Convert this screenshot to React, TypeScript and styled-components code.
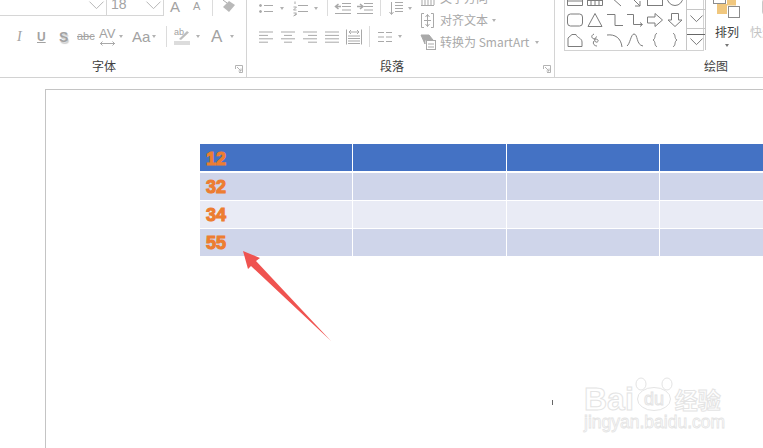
import React from 'react';
import styled, { createGlobalStyle } from 'styled-components';

const GlobalStyle = createGlobalStyle`
  html, body {
    margin: 0;
    width: 763px;
    height: 448px;
    overflow: hidden;
    background: #fff;
    font-family: "Liberation Sans", "Noto Sans CJK SC", sans-serif;
  }
`;

const Page = styled.div`
  width: 763px;
  height: 448px;
  display: flex;
  flex-direction: column;
  overflow: hidden;
`;

const Ribbon = styled.header`
  flex: none;
  height: 78px;
  box-sizing: border-box;
  display: flex;
  border-bottom: 1px solid #d2d2d2;
`;

const Group = styled.section<{ $w?: number }>`
  position: relative;
  box-sizing: border-box;
  flex: ${p => (p.$w ? `0 0 ${p.$w}px` : '1 1 0')};
  min-width: 0;
  height: 77px;
  display: flex;
  flex-direction: column;
  overflow: hidden;
  border-right: ${p => (p.$w ? '1px solid #d4d4d4' : 'none')};
`;

const GroupBody = styled.div`
  flex: 1;
  min-height: 0;
  display: flex;
`;

const Column = styled.div<{ $w?: number }>`
  flex: none;
  width: ${p => (p.$w ? `${p.$w}px` : 'auto')};
`;

const GroupLabel = styled.div<{ $x: number }>`
  flex: none;
  height: 15px;
  margin-bottom: 4px;
  padding-left: ${p => p.$x}px;
  font: 12px/15px "Noto Sans CJK SC", sans-serif;
  color: #404040;
`;

const Launcher = styled.svg`
  position: absolute;
  right: 3px;
  top: 65px;
  width: 8px;
  height: 8px;
  fill: none;
  stroke: #b4b4b4;
`;

const TopRow = styled.div<{ $pad?: number }>`
  display: flex;
  align-items: center;
  height: 16px;
  margin-bottom: 10px;
  padding-left: ${p => p.$pad ?? 0}px;
`;

const ToolRow = styled.div<{ $pad?: number }>`
  display: flex;
  align-items: center;
  height: 21px;
  padding-left: ${p => p.$pad ?? 0}px;
`;

const Slot = styled.div<{ $w: number; $inset?: number }>`
  flex: none;
  box-sizing: border-box;
  width: ${p => p.$w}px;
  padding-left: ${p => p.$inset ?? 0}px;
  display: flex;
  align-items: center;
`;

const Divider = styled.i<{ $h: number; $after: number }>`
  flex: none;
  width: 1px;
  height: ${p => p.$h}px;
  margin-right: ${p => p.$after}px;
  background: #dcdcdc;
`;

const Caret = styled.i`
  display: block;
  flex: none;
  width: 0;
  height: 0;
  border-left: 2.5px solid transparent;
  border-right: 2.5px solid transparent;
  border-top: 3px solid #b2b2b2;
`;

const Glyph = styled.svg<{ $tone?: string }>`
  display: block;
  flex: none;
  fill: none;
  stroke: ${p => p.$tone ?? '#a9a9a9'};
  stroke-width: 1;
  overflow: visible;
`;

const FontCombo = styled.div`
  flex: none;
  box-sizing: border-box;
  width: 164px;
  height: 17px;
  margin-top: -1px;
  display: flex;
  border-bottom: 1px solid #d6d6d6;
  border-right: 1px solid #d6d6d6;
`;

const ComboCell = styled.div<{ $w: number; $split?: boolean }>`
  flex: none;
  box-sizing: border-box;
  width: ${p => p.$w}px;
  display: flex;
  align-items: center;
  justify-content: space-between;
  padding: 0 2px 3px 4px;
  border-right: ${p => (p.$split ? '1px solid #d6d6d6' : 'none')};
`;

const SizeValue = styled.span`
  font-size: 14px;
  line-height: 14px;
  margin-top: -3px;
  color: #a3a3a3;
`;

const FaceText = styled.span<{ $size: number }>`
  font-size: ${p => p.$size}px;
  line-height: 1;
  color: #a2a2a2;
  white-space: nowrap;
`;

const GrowFace = styled(FaceText)`
  margin-top: -3px;
`;

const ItalicFace = styled(FaceText)`
  font-family: "Liberation Serif", serif;
  font-style: italic;
  padding-left: 2px;
`;

const UnderFace = styled(FaceText)`
  font-weight: 700;
  text-decoration: underline;
`;

const ShadowFace = styled(FaceText)`
  font-weight: 700;
  text-shadow: 1px 2px 1px #cfcfcf;
`;

const StruckFace = styled(FaceText)`
  text-decoration: line-through;
`;

const StackedFace = styled.div`
  display: flex;
  flex-direction: column;
  align-items: center;
  gap: 1px;
`;

const TextCommands = styled.div`
  flex: none;
  margin-top: -13px;
`;

const CommandRow = styled.div`
  height: 22px;
  display: flex;
  align-items: center;
  gap: 6px;
`;

const CommandText = styled.span`
  font: 12px/14px "Noto Sans CJK SC", sans-serif;
  color: #a9a9a9;
  white-space: nowrap;
`;

const CommandCaret = styled(Caret)`
  margin-left: -2px;
`;

const SmartArtGlyph = styled(Glyph)`
  margin-right: -2px;
`;

const DrawingBody = styled(GroupBody)`
  padding-left: 9px;
`;

const Gallery = styled.div`
  flex: none;
  box-sizing: border-box;
  width: 140px;
  height: 61px;
  margin-top: -10px;
  display: flex;
  border: 1px solid #d2d2d2;
  border-top: none;
`;

const ShapeGrid = styled.div`
  flex: none;
  width: 120px;
  display: grid;
  grid-template-columns: repeat(6, 20px);
  grid-auto-rows: 20px;
  align-items: center;
  justify-items: center;
`;

const GalleryScroll = styled.div`
  flex: none;
  width: 18px;
  margin-left: 1px;
  display: flex;
  flex-direction: column;
  border-left: 1px solid #c6c6c6;
  border-right: 1px solid #c6c6c6;
`;

const ScrollButton = styled.div<{ $h: number }>`
  box-sizing: border-box;
  height: ${p => p.$h}px;
  display: flex;
  flex-direction: column;
  align-items: center;
  justify-content: center;
  gap: 3px;
  border-bottom: 1px solid #c6c6c6;
  &:last-child { border-bottom: none; }
`;

const ScrollBar = styled.i`
  display: block;
  width: 100%;
  height: 1px;
  background: #666;
`;

const BigCommand = styled.div`
  flex: none;
  width: 46px;
  display: flex;
  flex-direction: column;
  align-items: center;
`;

const BigLabel = styled.span`
  margin-top: 5px;
  font: 12px/14px "Noto Sans CJK SC", sans-serif;
  color: #404040;
`;

const BigCaret = styled(Caret)`
  margin-top: 5px;
  border-top-color: #777;
`;

const QuickCommand = styled.div`
  flex: none;
  width: 40px;
`;

const QuickIcon = styled.div`
  box-sizing: border-box;
  width: 20px;
  height: 16px;
  margin: -1px 0 0 12px;
  border: 1px solid #c8c8c8;
  border-radius: 3px;
`;

const QuickLabel = styled.div`
  margin-top: 10px;
  font: 12px/14px "Noto Sans CJK SC", sans-serif;
  color: #c4c4c4;
  white-space: nowrap;
`;

const Workspace = styled.main`
  flex: 1;
  min-height: 0;
  display: flex;
  padding: 11px 0 0 45px;
`;

const Slide = styled.div`
  position: relative;
  flex: 1;
  min-width: 0;
  overflow: hidden;
  padding: 54px 0 0 154px;
  border-top: 1px solid #c4c4c4;
  border-left: 1px solid #c4c4c4;
`;

const SlideTable = styled.div`
  width: 700px;
  display: grid;
  grid-template-columns: repeat(4, 152.33px);
  grid-template-rows: 28px 27px 27px 27px;
  column-gap: 1px;
  row-gap: 1px;
`;

const TableCell = styled.div<{ $tone: string }>`
  display: flex;
  align-items: center;
  padding: 1px 0 0 6px;
  background: ${p => p.$tone};
  font-size: 18px;
  font-weight: 700;
  color: #ed7d31;
  -webkit-text-stroke: 1.1px #ed7d31;
`;

const HeaderCell = styled(TableCell)`
  padding-top: 3px;
  border-bottom: 1px solid #fff;
`;

const PointerArrow = styled.svg`
  position: absolute;
  left: 194px;
  top: 158px;
  width: 95px;
  height: 97px;
  fill: #ef5350;
`;

const TextCursor = styled.i`
  position: absolute;
  left: 506px;
  top: 310px;
  width: 1px;
  height: 5px;
  background: #666;
`;

const Watermark = styled.div`
  position: absolute;
  left: 538px;
  top: 285px;
  width: 145px;
  display: flex;
  flex-direction: column;
  color: #fff;
  -webkit-text-stroke: 1px #e4e4e4;
`;

const WatermarkLogo = styled.div`
  display: flex;
  align-items: flex-end;
  height: 38px;
`;

const WatermarkWord = styled.span`
  font-size: 32px;
  line-height: 28px;
  font-weight: 700;
`;

const WatermarkPaw = styled(Glyph)`
  margin-left: 1px;
`;

const WatermarkHan = styled.span`
  margin-left: 2px;
  font: 700 23px/28px "Noto Sans CJK SC", sans-serif;
`;

const WatermarkUrl = styled.span`
  font-size: 17.5px;
  line-height: 18px;
  -webkit-text-stroke: 0.8px #e4e4e4;
`;

const Chevron = ({ w = 15, tone = '#b8b8b8' }: { w?: number; tone?: string }) => (
  <Glyph $tone={tone} width={w} height={w * 0.55} viewBox="0 0 15 8">
    <path d="M0.5 0.5L7.5 7.5L14.5 0.5" />
  </Glyph>
);

const LinesIcon = ({ rows }: { rows: [number, number][] }) => (
  <Glyph width={15} height={12} viewBox="0 0 15 12">
    {rows.map(([x, len], i) => (
      <path key={i} d={`M${x} ${1 + i * 3.4}H${x + len}`} />
    ))}
  </Glyph>
);

const BulletsIcon = () => (
  <Glyph width={14} height={9} viewBox="0 0 14 9">
    <circle cx="1.5" cy="1.5" r="1" fill="#a9a9a9" />
    <circle cx="1.5" cy="7.5" r="1" fill="#a9a9a9" />
    <path d="M5 1.5H14M5 7.5H14" />
  </Glyph>
);

const NumbersIcon = () => (
  <Glyph width={15} height={15} viewBox="0 0 15 15">
    <path d="M2 0.5V3M0.5 6H3.5L0.5 9H3.5M0.5 12H3.5L2 13.5H3.5L0.5 15" />
    <path d="M5 4.5H15M5 10.5H15" />
  </Glyph>
);

const OutdentIcon = ({ flip }: { flip?: boolean }) => (
  <Glyph width={16} height={11} viewBox="0 0 16 11">
    <path d="M7 0.5H16M7 3.5H16M7 7H16M0 10.5H16" />
    <path
      d={flip ? 'M0 3.5H5M3 1L6 3.5L3 6' : 'M6 3.5H1M3.5 1L0.5 3.5L3.5 6'}
      strokeWidth="1.5"
    />
  </Glyph>
);

const SpacingIcon = () => (
  <Glyph width={14} height={13} viewBox="0 0 14 13">
    <path d="M2.5 0V12M0.5 10L2.5 12.5L4.5 10" />
    <path d="M6 0.5H14M6 3.5H14M6 6.5H14M6 9.5H14" />
  </Glyph>
);

const DistributeIcon = () => (
  <Glyph width={16} height={16} viewBox="0 0 16 16">
    <path d="M0.5 0.5V15.5M15.5 0.5V15.5" />
    <path d="M3 3H13M5 1L3 3L5 5M11 1L13 3L11 5" />
    <path d="M2 7H14M2 9.5H14M2 12H14M2 14.5H14" />
  </Glyph>
);

const ColumnsIcon = () => (
  <Glyph width={14} height={10} viewBox="0 0 14 10">
    <path d="M0 0.5H6M8 0.5H14M0 5H6M8 5H14M0 9.5H6M8 9.5H14" />
  </Glyph>
);

const TextBoxIcon = () => (
  <Glyph width={13} height={15} viewBox="0 0 13 15">
    <path d="M3 0.5H0.5V14.5H3M10 0.5H12.5V14.5H10" />
    <path d="M6.5 1.5V13.5M4.5 4L6.5 1.5L8.5 4M4.5 11L6.5 13.5L8.5 11M3 7.5H10" />
  </Glyph>
);

const TopDirectionIcon = () => (
  <Glyph width={13} height={15} viewBox="0 0 13 15">
    <path d="M1 0V14M4 0V14M7 0V14M10 0V14M13 0V14M0 14.5H13" />
  </Glyph>
);

const SmartArtIcon = () => (
  <SmartArtGlyph width={15} height={15} viewBox="0 0 15 15">
    <path d="M0 0H8L12 5H4V9Z" fill="#a9a9a9" />
    <rect x="5.5" y="5.5" width="9" height="9" fill="#fff" />
    <path d="M7 9H13M7 12H13" />
  </SmartArtGlyph>
);

const HighlightIcon = () => (
  <Glyph width={17} height={17} viewBox="0 0 17 17">
    <text x="0" y="7" fontSize="9" fill="#a2a2a2" stroke="none" fontFamily="Liberation Sans">ab</text>
    <rect x="0" y="13" width="16" height="4" fill="#dcdcdc" stroke="none" />
    <path d="M5 11L13 3L15 4.5L7 12Z" fill="#bdbdbd" stroke="none" />
  </Glyph>
);

const EraserIcon = () => (
  <Glyph width={14} height={13} viewBox="0 2 14 13">
    <path d="M1 7L7 1L13 5L7 12Z" fill="#b9b9b9" stroke="none" />
    <path d="M5 3L1 0" />
  </Glyph>
);

const ArrangeIcon = () => (
  <Glyph $tone="#8c8c8c" width={28} height={20} viewBox="0 0 28 20">
    <rect x="0.5" y="-5" width="12" height="8.5" />
    <path d="M4 4H14V0H23V5.5H14V14H4Z" fill="#f0c77e" stroke="none" />
    <rect x="15.5" y="6.5" width="11" height="11" fill="#fff" />
  </Glyph>
);

const shapeSize = { width: 16, height: 14, viewBox: '0 0 16 14' };

const galleryShapes = [
  <path d="M0.5 -4H15.5V12.5H0.5ZM0.5 8H15.5" />,
  <path d="M0.5 -4H15.5V12.5H0.5ZM4 8V12M8 8V12M12 8V12M0.5 7.5H15.5" />,
  <path d="M4 4L14 13" />,
  <path d="M3 3L13 13M13 8V13H8" />,
  <rect x="0.5" y="-4" width="15" height="16.5" />,
  <ellipse cx="8" cy="4" rx="8" ry="8.5" />,
  <rect x="0.5" y="1" width="15" height="12" rx="3" />,
  <path d="M8 0.5L15 13.5H1Z" />,
  <path d="M0 1.5H8V12.5H16" />,
  <path d="M0 1.5H6.5V11.5H15M13 9.5L15.5 11.5L13 13.5" />,
  <path d="M0.5 4H8V0.5L15.5 7L8 13.5V10H0.5Z" />,
  <path d="M4.5 0.5H11.5V7H15L8 13.5L1 7H4.5Z" />,
  <path d="M1 13.5V5L5 1.5H9C10 5 15 5 15 9V13.5Z" />,
  <path d="M7 1C3 3 5 6 8 6C13 6 11 10 9 9C6 8 9 3 10 4M7 8C5 11 8 13 10 13" />,
  <path d="M0 2C8 1 14 5 15 14" />,
  <path d="M0 13C3 11 4 1 7 1C11 1 9 12 16 13" />,
  <path d="M10 0.5C7 0.5 9 6 6 7C9 8 7 13.5 10 13.5" />,
  <path d="M6 0.5C9 0.5 7 6 10 7C7 8 9 13.5 6 13.5" />,
];

const tableRows = [
  { label: '12', tone: '#4472c4' },
  { label: '32', tone: '#cfd5ea' },
  { label: '34', tone: '#e9ebf5' },
  { label: '55', tone: '#cfd5ea' },
];

const FontGroup = () => (
  <Group $w={247}>
    <GroupBody>
      <Column>
        <TopRow>
          <FontCombo>
            <ComboCell $w={107} $split>
              <span />
              <Chevron />
            </ComboCell>
            <ComboCell $w={56}>
              <SizeValue>18</SizeValue>
              <Chevron />
            </ComboCell>
          </FontCombo>
          <Slot $w={23} $inset={6}><GrowFace $size={15}>A</GrowFace></Slot>
          <Slot $w={25} $inset={6}><GrowFace $size={11}>A</GrowFace></Slot>
          <Divider $h={16} $after={9} />
          <EraserIcon />
        </TopRow>
        <ToolRow $pad={15}>
          <Slot $w={22}><ItalicFace $size={14}>I</ItalicFace></Slot>
          <Slot $w={22}><UnderFace $size={12}>U</UnderFace></Slot>
          <Slot $w={18}><ShadowFace $size={14}>S</ShadowFace></Slot>
          <Slot $w={22}><StruckFace $size={11}>abc</StruckFace></Slot>
          <Slot $w={20}>
            <StackedFace>
              <FaceText $size={13}>AV</FaceText>
              <Glyph width={15} height={5} viewBox="0 0 15 5">
                <path d="M0 2.5H15M2.5 0.5L0.5 2.5L2.5 4.5M12.5 0.5L14.5 2.5L12.5 4.5" />
              </Glyph>
            </StackedFace>
          </Slot>
          <Slot $w={13}><Caret /></Slot>
          <Slot $w={20}><FaceText $size={15}>Aa</FaceText></Slot>
          <Slot $w={14}><Caret /></Slot>
          <Divider $h={21} $after={7} />
          <Slot $w={22}><HighlightIcon /></Slot>
          <Slot $w={15}><Caret /></Slot>
          <Slot $w={19}><FaceText $size={17}>A</FaceText></Slot>
          <Caret />
        </ToolRow>
      </Column>
    </GroupBody>
    <GroupLabel $x={92}>字体</GroupLabel>
    <Launcher viewBox="0 0 8 8">
      <path d="M0.5 4V0.5H7.5V7.5H4M2 2L6 6M6 3.5V6H3.5" />
    </Launcher>
  </Group>
);

const ParagraphGroup = () => (
  <Group $w={308}>
    <GroupBody>
      <Column $w={174}>
        <TopRow $pad={12}>
          <Slot $w={21}><BulletsIcon /></Slot>
          <Slot $w={13}><Caret /></Slot>
          <Slot $w={21}><NumbersIcon /></Slot>
          <Slot $w={13}><Caret /></Slot>
          <Divider $h={16} $after={7} />
          <Slot $w={22}><OutdentIcon /></Slot>
          <Slot $w={23}><OutdentIcon flip /></Slot>
          <Divider $h={16} $after={8} />
          <Slot $w={19}><SpacingIcon /></Slot>
          <Caret />
        </TopRow>
        <ToolRow $pad={12}>
          <Slot $w={22}><LinesIcon rows={[[0, 14], [0, 9], [0, 14], [0, 9]]} /></Slot>
          <Slot $w={22}><LinesIcon rows={[[0, 14], [3, 8], [0, 14], [3, 8]]} /></Slot>
          <Slot $w={22}><LinesIcon rows={[[0, 14], [5, 9], [0, 14], [5, 9]]} /></Slot>
          <Slot $w={21}><LinesIcon rows={[[0, 14], [0, 14], [0, 14], [0, 14]]} /></Slot>
          <Slot $w={23}><DistributeIcon /></Slot>
          <Divider $h={21} $after={8} />
          <Slot $w={20}><ColumnsIcon /></Slot>
          <Caret />
        </ToolRow>
      </Column>
      <TextCommands>
        <CommandRow>
          <TopDirectionIcon />
          <CommandText>文字方向</CommandText>
        </CommandRow>
        <CommandRow>
          <TextBoxIcon />
          <CommandText>对齐文本</CommandText>
          <CommandCaret />
        </CommandRow>
        <CommandRow>
          <SmartArtIcon />
          <CommandText>转换为 SmartArt</CommandText>
          <Caret />
        </CommandRow>
      </TextCommands>
    </GroupBody>
    <GroupLabel $x={133}>段落</GroupLabel>
    <Launcher viewBox="0 0 8 8">
      <path d="M0.5 4V0.5H7.5V7.5H4M2 2L6 6M6 3.5V6H3.5" />
    </Launcher>
  </Group>
);

const DrawingGroup = () => (
  <Group>
    <DrawingBody>
      <Gallery>
        <ShapeGrid>
          {galleryShapes.map((shape, i) => (
            <Glyph key={i} $tone="#7c7c7c" {...shapeSize}>{shape}</Glyph>
          ))}
        </ShapeGrid>
        <GalleryScroll>
          <ScrollButton $h={20} />
          <ScrollButton $h={19}><Chevron w={13} tone="#666" /></ScrollButton>
          <ScrollButton $h={21}>
            <ScrollBar />
            <Chevron w={13} tone="#666" />
          </ScrollButton>
        </GalleryScroll>
      </Gallery>
      <BigCommand>
        <ArrangeIcon />
        <BigLabel>排列</BigLabel>
        <BigCaret />
      </BigCommand>
      <QuickCommand>
        <QuickIcon />
        <QuickLabel>快速</QuickLabel>
      </QuickCommand>
    </DrawingBody>
    <GroupLabel $x={149}>绘图</GroupLabel>
  </Group>
);

export default function App() {
  return (
    <Page>
      <GlobalStyle />
      <Ribbon>
        <FontGroup />
        <ParagraphGroup />
        <DrawingGroup />
      </Ribbon>
      <Workspace>
        <Slide>
          <SlideTable>
            {tableRows.map((row, r) =>
              [0, 1, 2, 3].map(c => {
                const Cell = r === 0 ? HeaderCell : TableCell;
                return (
                  <Cell key={`${r}-${c}`} $tone={row.tone}>
                    {c === 0 ? row.label : null}
                  </Cell>
                );
              }),
            )}
          </SlideTable>
          <PointerArrow viewBox="240 248 95 97">
            <path d="M243 251L260 258L256 261L331 341L251 266L248 269Z" />
          </PointerArrow>
          <TextCursor />
          <Watermark>
            <WatermarkLogo>
              <WatermarkWord>Bai</WatermarkWord>
              <WatermarkPaw $tone="#e4e4e4" width={38} height={38} viewBox="0 0 38 38">
                <ellipse cx="6" cy="9" rx="5" ry="6" fill="#fff" />
                <ellipse cx="32" cy="9" rx="5" ry="6" fill="#fff" />
                <ellipse cx="19" cy="24" rx="16.5" ry="11.5" fill="#fff" />
                <text x="19" y="30" fontSize="18" textAnchor="middle" fill="#fff" fontFamily="Liberation Sans">du</text>
              </WatermarkPaw>
              <WatermarkHan>经验</WatermarkHan>
            </WatermarkLogo>
            <WatermarkUrl>jingyan.baidu.com</WatermarkUrl>
          </Watermark>
        </Slide>
      </Workspace>
    </Page>
  );
}
